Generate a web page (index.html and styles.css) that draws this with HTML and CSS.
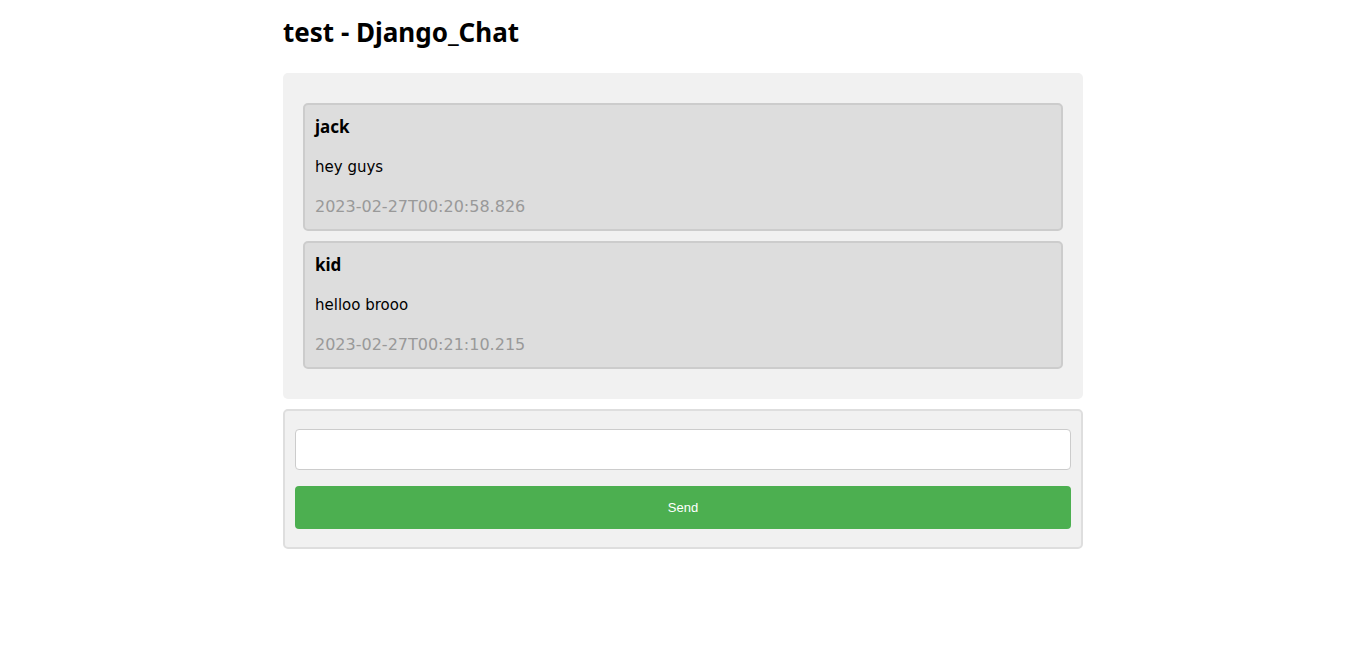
FILE: index.html
```html
<!DOCTYPE html>
<html lang="en">
<head>
<meta charset="utf-8">
<title>test - Django_Chat</title>
<link rel="stylesheet" href="styles.css">
</head>
<body>
<h2 class="room-title">test - Django_Chat</h2>
<main class="messages">
  <article class="message">
    <b class="author">jack</b>
    <p class="text">hey guys</p>
    <time class="time" datetime="2023-02-27T00:20:58.826">2023-02-27T00:20:58.826</time>
  </article>
  <article class="message">
    <b class="author">kid</b>
    <p class="text">helloo brooo</p>
    <time class="time" datetime="2023-02-27T00:21:10.215">2023-02-27T00:21:10.215</time>
  </article>
</main>
<form class="composer">
  <input class="field" type="text" name="message" aria-label="Message">
  <button class="send" type="submit">Send</button>
</form>
</body>
</html>
```
FILE: styles.css
```css
* {
  box-sizing: border-box;
}

body {
  max-width: 800px;
  margin: 0 auto;
  font: 16px/24px "DejaVu Sans", Verdana, sans-serif;
  color: #000;
  background: #fff;
}

.room-title {
  margin: 0;
  padding: 14px 0 23px;
  font-family: "Noto Sans", sans-serif;
  font-size: 26px;
  line-height: 36px;
}

.messages {
  padding: 20px;
  border-radius: 5px;
  background: #f1f1f1;
}

.message {
  margin: 10px 0;
  padding: 10px;
  border: 2px solid #ccc;
  border-radius: 5px;
  background: #ddd;
}

.author,
.time {
  display: block;
}

.author {
  font-family: "Noto Sans", sans-serif;
  font-size: 17px;
}

.text {
  margin: 16px 0;
  font-size: 15px;
}

.time {
  color: #999;
}

.composer {
  margin-top: 10px;
  padding: 10px;
  border: 2px solid #dedede;
  border-radius: 5px;
  background: #f1f1f1;
}

.field,
.send {
  display: block;
  width: 100%;
  margin: 8px 0;
  border-radius: 4px;
  font: 13px/15px "Liberation Sans", Arial, sans-serif;
}

.field {
  padding: 12px 20px;
  border: 1px solid #ccc;
}

.send {
  margin-top: 16px;
  padding: 14px 20px;
  border: 0;
  color: #fff;
  background: #4caf50;
  cursor: pointer;
}
```
